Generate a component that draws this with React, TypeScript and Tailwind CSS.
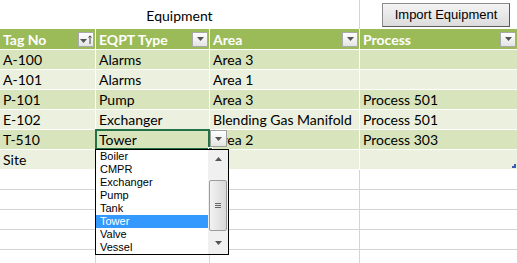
const cellFont = { fontFamily: "Lato, 'Open Sans', sans-serif" };

const rows = [
  ["A-100", "Alarms", "Area 3", ""],
  ["A-101", "Alarms", "Area 1", ""],
  ["P-101", "Pump", "Area 3", "Process 501"],
  ["E-102", "Exchanger", "Blending Gas Manifold", "Process 501"],
  ["T-510", "Tower", "Area 2", "Process 303"],
  ["Site", "", "", ""],
];

const options = ["Boiler", "CMPR", "Exchanger", "Pump", "Tank", "Tower", "Valve", "Vessel"];

const Tri = ({ up = false, className = "" }: { up?: boolean; className?: string }) => (
  <svg width="7" height="4" viewBox="0 0 7 4" className={className}>
    <path d={up ? "M0 4 L3.5 0 L7 4 Z" : "M0 0 L7 0 L3.5 4 Z"} fill="#555" />
  </svg>
);

const FilterBtn = ({ sorted = false }: { sorted?: boolean }) => (
  <div className="w-[16px] h-[15px] border border-[#a9a9a9] bg-gradient-to-b from-white to-[#e4e4e4] flex items-center justify-center gap-[1px]">
    {sorted ? (
      <>
        <Tri className="mt-[3px]" />
        <svg width="4" height="9" viewBox="0 0 4 9">
          <path d="M2 9 V1 M0.5 2.5 L2 0.8 L3.5 2.5" stroke="#444" strokeWidth="1" fill="none" />
        </svg>
      </>
    ) : (
      <Tri />
    )}
  </div>
);

const widths = ["w-[96px]", "w-[114px]", "w-[150px]", "flex-1"];

export default function App() {
  return (
    <div className="w-[517px] h-[263px] bg-white overflow-hidden text-[14px] text-black" style={cellFont}>
      {/* title row */}
      <div className="flex h-[29px]">
        <div className="w-[360px] border-r border-[#d4d4d4] flex items-end justify-center pb-[3px] text-[14px]">
          Equipment
        </div>
        <div className="flex-1 pl-[22px] pt-[3px]">
          <button
            className="w-[128px] h-[24px] border border-[#8c8c8c] border-b-[#5a5a5a] border-r-[#5a5a5a] bg-gradient-to-b from-[#f4f4f4] to-[#dcdcdc] text-[13px] text-black"
            style={{ fontFamily: "'Liberation Sans', Arial, sans-serif" }}
          >
            Import Equipment
          </button>
        </div>
      </div>

      {/* header */}
      <div className="flex h-[21px] bg-[#9BBB59] border-b border-white text-white font-bold">
        {["Tag No", "EQPT Type", "Area", "Process"].map((h, i) => (
          <div
            key={h}
            className={`${widths[i]} ${i < 3 ? "border-r border-white" : ""} flex items-center justify-between pl-[3px] pr-[1px]`}
          >
            <span className="leading-none mt-[1px]">{h}</span>
            <FilterBtn sorted={i === 0} />
          </div>
        ))}
      </div>

      {/* data */}
      {rows.map((r, ri) => (
        <div key={ri} className={`flex h-[20px] border-b border-white ${ri % 2 === 0 ? "bg-[#D8E4BC]" : "bg-[#EBF1DE]"}`}>
          {r.map((c, ci) => (
            <div
              key={ci}
              className={`${widths[ci]} ${ci < 3 ? "border-r border-white" : ""} relative flex items-center pl-[3px] whitespace-nowrap`}
            >
              <span className="leading-none mt-[1px]">{c}</span>
              {ri === 4 && ci === 1 && (
                <>
                  <div className="absolute left-[-1px] top-[-1px] w-[115px] h-[21px] border-2 border-[#217346]" />
                  <div className="absolute left-[112px] top-[17px] w-[5px] h-[5px] bg-[#217346] border border-white" />
                  <div className="absolute left-[114px] top-[0px] w-[17px] h-[17px] border border-[#a0a0a0] bg-gradient-to-b from-white to-[#e4e4e4] flex items-center justify-center z-10">
                    <Tri />
                  </div>
                  <div
                    className="absolute left-[-1px] top-[19px] w-[134px] h-[106px] border border-black bg-white z-20 flex text-[11px]"
                    style={{ fontFamily: "'Liberation Sans', Arial, sans-serif" }}
                  >
                    <div className="flex-1 flex flex-col">
                      {options.map((o) => (
                        <div
                          key={o}
                          className={`h-[13px] leading-[13px] pl-[4px] ${o === "Tower" ? "bg-[#3399FF] text-white" : "text-black"}`}
                        >
                          {o}
                        </div>
                      ))}
                    </div>
                    <div className="w-[20px] bg-[#f0f0f0] flex flex-col items-center">
                      <div className="h-[18px] flex items-center justify-center">
                        <Tri up />
                      </div>
                      <div className="w-[18px] h-[51px] mt-[12px] rounded-[2px] border border-[#9c9c9c] bg-gradient-to-r from-[#f3f3f3] to-[#d8d8d8] flex flex-col items-center justify-center gap-[1px]">
                        <div className="w-[6px] h-px bg-[#666]" />
                        <div className="w-[6px] h-px bg-[#666]" />
                        <div className="w-[6px] h-px bg-[#666]" />
                      </div>
                      <div className="flex-1 flex items-center justify-center">
                        <Tri />
                      </div>
                    </div>
                  </div>
                </>
              )}
              {ri === 5 && ci === 3 && (
                <div className="absolute right-[1px] bottom-[1px] w-[4px] h-[4px] border-r-2 border-b-2 border-[#3B5BB5]" />
              )}
            </div>
          ))}
        </div>
      ))}

      {/* empty sheet rows */}
      {[0, 1, 2, 3, 4].map((k) => (
        <div key={k} className="flex h-[20px] border-b border-[#d4d4d4]">
          {[0, 1, 2, 3].map((ci) => (
            <div key={ci} className={`${widths[ci]} ${ci < 3 ? "border-r border-[#d4d4d4]" : ""}`} />
          ))}
        </div>
      ))}
    </div>
  );
}
